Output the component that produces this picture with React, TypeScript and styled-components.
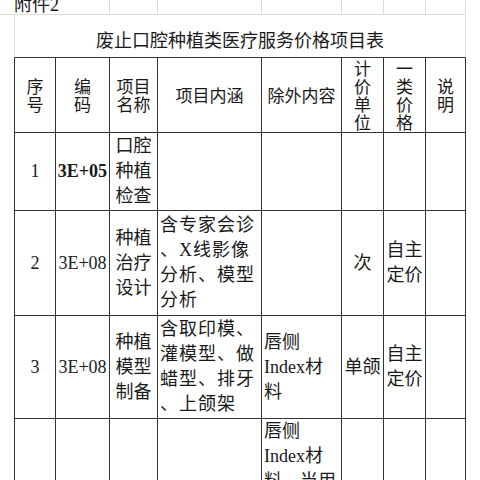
import * as React from 'react';
import styled, { createGlobalStyle } from 'styled-components';

const GlobalStyle = createGlobalStyle`
  html, body {
    margin: 0;
    padding: 0;
    background: #ffffff;
    overflow: hidden;
  }
`;

type Line = 'light' | 'dark' | 'none';

const lineColor = (line: Line) =>
  line === 'dark' ? '#333333' : line === 'light' ? '#dcdcdc' : 'transparent';

const Sheet = styled.div`
  display: grid;
  grid-template-columns: 14px 42px 54px 48px 104px 80px 42px 42px 40px;
  grid-template-rows: 15px 43px 75px 78px 105px 103px 110px;
  width: 466px;
  color: #1a1a1a;
  font-family: "Liberation Serif", "Noto Sans CJK SC", serif;
`;

const Cell = styled.div<{
  $line?: Line;
  $first?: boolean;
  $h?: 'left' | 'center';
  $v?: 'top' | 'center';
}>`
  box-sizing: border-box;
  display: flex;
  align-items: ${(p) => (p.$v === 'top' ? 'flex-start' : 'center')};
  justify-content: ${(p) => (p.$h === 'left' ? 'flex-start' : 'center')};
  padding: ${(p) => (p.$h === 'left' ? '0 0 0 2px' : '0')};
  border-right: 1px solid ${(p) => lineColor(p.$line || 'dark')};
  border-bottom: 1px solid ${(p) => lineColor(p.$line || 'dark')};
  border-left: ${(p) => (p.$first ? `1px solid ${lineColor(p.$line || 'dark')}` : 'none')};
  min-width: 0;
`;

const Blank = styled.div`
  box-sizing: border-box;
`;

const Attachment = styled.div`
  box-sizing: border-box;
  grid-column: span 3;
  padding-left: 14px;
  border-right: 1px solid #dcdcdc;
  border-bottom: 1px solid #dcdcdc;
  font-size: 18px;
  line-height: 18px;
  overflow: hidden;
  span {
    display: block;
    margin-top: -4px;
  }
`;

const Title = styled.div`
  box-sizing: border-box;
  grid-column: span 8;
  display: flex;
  align-items: center;
  justify-content: center;
  padding-top: 5px;
  border-left: 1px solid #dcdcdc;
  border-right: 1px solid #dcdcdc;
  border-bottom: 1px solid #333333;
  font-size: 18px;
`;

const Head = styled.span`
  display: block;
  text-align: center;
  font-family: "Noto Sans CJK SC", sans-serif;
  font-size: 17px;
  line-height: 18px;
`;

const Text = styled.span<{ $bold?: boolean; $h?: 'left' | 'center'; $spacing?: number }>`
  display: block;
  text-align: ${(p) => (p.$h === 'left' ? 'left' : 'center')};
  font-size: 18px;
  line-height: 25px;
  font-weight: ${(p) => (p.$bold ? 700 : 400)};
  letter-spacing: ${(p) => p.$spacing || 0}px;
  white-space: nowrap;
`;

const lines = (t: string) =>
  t.split('|').map((s, i, a) => (
    <React.Fragment key={i}>
      {s}
      {i < a.length - 1 && <br />}
    </React.Fragment>
  ));

interface RowData {
  no: string;
  code: string;
  bold?: boolean;
  name: string;
  content: string;
  exclude: string;
  unit: string;
  price: string;
  note: string;
  excludeTop?: boolean;
}

const rows: RowData[] = [
  { no: '1', code: '3E+05', bold: true, name: '口腔|种植|检查', content: '', exclude: '', unit: '', price: '', note: '' },
  { no: '2', code: '3E+08', name: '种植|治疗|设计', content: '含专家会诊|、X线影像|分析、模型|分析', exclude: '', unit: '次', price: '自主|定价', note: '' },
  { no: '3', code: '3E+08', name: '种植|模型|制备', content: '含取印模、|灌模型、做|蜡型、排牙|、上颌架', exclude: '唇侧|Index材|料', unit: '单颌', price: '自主|定价', note: '' },
  { no: '', code: '', name: '', content: '', exclude: '唇侧|Index材|料、当用|于', unit: '', price: '', note: '', excludeTop: true },
];

const headers = ['序|号', '编|码', '项目|名称', '项目内涵', '除外内容', '计|价|单|位', '一|类|价|格', '说|明'];

const App: React.FC = () => {
  return (
    <>
      <GlobalStyle />
      <Sheet>
        <Attachment>
          <span>附件2</span>
        </Attachment>
        {[0, 1, 2, 3, 4, 5].map((i) => (
          <Cell key={i} $line="light" />
        ))}

        <Blank />
        <Title>废止口腔种植类医疗服务价格项目表</Title>

        <Blank />
        {headers.map((h, i) => (
          <Cell key={h} $first={i === 0}>
            <Head>{lines(h)}</Head>
          </Cell>
        ))}

        {rows.map((r, idx) => (
          <React.Fragment key={idx}>
            <Blank />
            <Cell $first>
              <Text>{r.no}</Text>
            </Cell>
            <Cell>
              <Text $bold={r.bold}>{r.code}</Text>
            </Cell>
            <Cell>
              <Text>{lines(r.name)}</Text>
            </Cell>
            <Cell $h="left">
              <Text $h="left" $spacing={1}>{lines(r.content)}</Text>
            </Cell>
            <Cell $h="left" $v={r.excludeTop ? 'top' : 'center'}>
              <Text $h="left">{lines(r.exclude)}</Text>
            </Cell>
            <Cell>
              <Text>{r.unit}</Text>
            </Cell>
            <Cell>
              <Text>{lines(r.price)}</Text>
            </Cell>
            <Cell>
              <Text>{r.note}</Text>
            </Cell>
          </React.Fragment>
        ))}
      </Sheet>
    </>
  );
};

export default App;
